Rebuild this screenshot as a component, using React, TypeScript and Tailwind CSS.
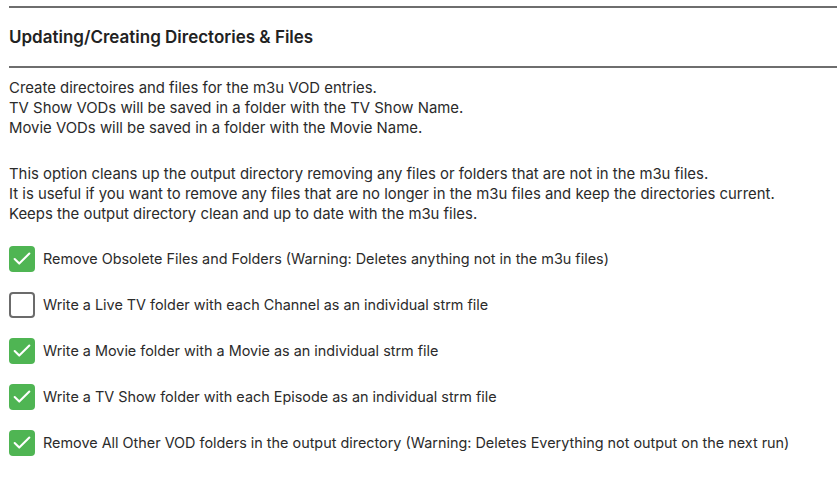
import React from "react";
import { Check } from "lucide-react";

const options: { label: string; checked: boolean }[] = [
  { label: "Remove Obsolete Files and Folders (Warning: Deletes anything not in the m3u files)", checked: true },
  { label: "Write a Live TV folder with each Channel as an individual strm file", checked: false },
  { label: "Write a Movie folder with a Movie as an individual strm file", checked: true },
  { label: "Write a TV Show folder with each Episode as an individual strm file", checked: true },
  { label: "Remove All Other VOD folders in the output directory (Warning: Deletes Everything not output on the next run)", checked: true },
];

export default function App() {
  return (
    <div
      className="w-[837px] h-[481px] bg-white pl-[9px] pt-[6px] text-[#2b2b2b] overflow-hidden"
      style={{ fontFamily: "Inter, 'Noto Sans', sans-serif" }}
    >
      <div className="h-[2px] bg-[#6e6e6e]" />
      <h3 className="mt-[17px] text-[17px] leading-[24px] font-semibold text-[#222]">
        Updating/Creating Directories &amp; Files
      </h3>
      <div className="mt-[17px] h-[2px] bg-[#6e6e6e]" />
      <div className="mt-[10px] text-[14.9px] leading-[20px]">
        <p>Create directoires and files for the m3u VOD entries.</p>
        <p>TV Show VODs will be saved in a folder with the TV Show Name.</p>
        <p>Movie VODs will be saved in a folder with the Movie Name.</p>
      </div>
      <div className="mt-[26px] text-[14.9px] leading-[20px]">
        <p>This option cleans up the output directory removing any files or folders that are not in the m3u files.</p>
        <p>It is useful if you want to remove any files that are no longer in the m3u files and keep the directories current.</p>
        <p>Keeps the output directory clean and up to date with the m3u files.</p>
      </div>
      <div className="mt-[22px] flex flex-col gap-[20px]">
        {options.map((o) => (
          <label key={o.label} className="flex items-center gap-[8px] text-[14.4px] leading-[20px]">
            {o.checked ? (
              <span className="w-[26px] h-[26px] rounded-[4px] bg-[#4fb553] flex items-center justify-center shrink-0">
                <Check size={22} color="#ffffff" strokeWidth={2.25} />
              </span>
            ) : (
              <span className="w-[26px] h-[26px] rounded-[4px] border-2 border-[#6b6b6b] bg-white shrink-0" />
            )}
            <span>{o.label}</span>
          </label>
        ))}
      </div>
    </div>
  );
}
